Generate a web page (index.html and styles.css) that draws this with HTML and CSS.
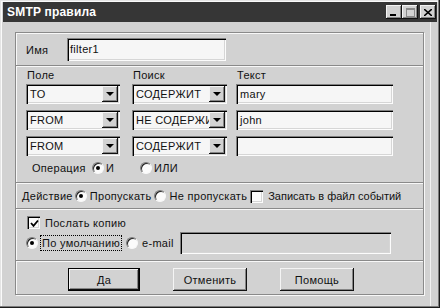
FILE: index.html
```html
<!DOCTYPE html>
<html lang="ru">
<head>
    <meta charset="UTF-8">
    <title>SMTP правила</title>
    <link rel="stylesheet" href="styles.css">
</head>
<body>
    <div class="window">
        <div class="titlebar">
            <span class="title">SMTP правила</span>
            <span class="tb-btn tb-min"><span class="min-bar"></span></span>
            <span class="tb-btn tb-max"><span class="max-box"></span></span>
            <span class="tb-btn tb-close">
                <svg width="8" height="7" viewBox="0 0 8 7"><path d="M0 0 L8 7 M8 0 L0 7" stroke="#000" stroke-width="1.6"/></svg>
            </span>
        </div>

        <div class="client">
            <div class="frame">
                <!-- name -->
                <div class="sect sect-name">
                    <span class="name-label">Имя</span>
                    <div class="field name-field">filter1</div>
                </div>

                <!-- rules -->
                <div class="sect sect-rules">
                    <div class="rules-grid">
                        <span class="col-label">Поле</span>
                        <span class="col-label">Поиск</span>
                        <span class="col-label">Текст</span>

                        <div class="combo combo-field"><span class="combo-text">TO</span><span class="combo-btn"></span></div>
                        <div class="combo combo-search"><span class="combo-text">СОДЕРЖИТ</span><span class="combo-btn"></span></div>
                        <div class="field text-field">mary</div>

                        <div class="combo combo-field"><span class="combo-text">FROM</span><span class="combo-btn"></span></div>
                        <div class="combo combo-search"><span class="combo-text">НЕ СОДЕРЖИТ</span><span class="combo-btn"></span></div>
                        <div class="field text-field">john</div>

                        <div class="combo combo-field"><span class="combo-text">FROM</span><span class="combo-btn"></span></div>
                        <div class="combo combo-search"><span class="combo-text">СОДЕРЖИТ</span><span class="combo-btn"></span></div>
                        <div class="field text-field"></div>
                    </div>
                    <div class="op-row">
                        <span class="op-label">Операция</span>
                        <span class="radio checked"></span>
                        <span class="op-and">И</span>
                        <span class="radio"></span>
                        <span class="op-or">ИЛИ</span>
                    </div>
                </div>

                <!-- action -->
                <div class="sect sect-action">
                    <span class="action-label">Действие</span>
                    <span class="radio checked"></span>
                    <span class="opt-text">Пропускать</span>
                    <span class="radio"></span>
                    <span class="opt-text">Не пропускать</span>
                    <span class="check"></span>
                    <span class="opt-text log-text">Записать в файл событий</span>
                </div>

                <!-- copy -->
                <div class="sect sect-copy">
                    <div class="copy-row">
                        <span class="check checked">
                            <svg width="9" height="9" viewBox="0 0 9 9"><path d="M1 4 L3.5 6.8 L8 1.5" fill="none" stroke="#000" stroke-width="1.8"/></svg>
                        </span>
                        <span class="opt-text">Послать копию</span>
                    </div>
                    <div class="dest-row">
                        <span class="radio checked"></span>
                        <span class="opt-text focused">По умолчанию</span>
                        <span class="radio"></span>
                        <span class="opt-text">e-mail</span>
                        <div class="field email-field disabled"></div>
                    </div>
                </div>

                <!-- buttons -->
                <div class="sect sect-buttons">
                    <button class="btn default">Да</button>
                    <button class="btn">Отменить</button>
                    <button class="btn">Помощь</button>
                </div>
            </div>
        </div>
    </div>
</body>
</html>
```

FILE: styles.css
```css
body {
    margin: 0;
    font-family: "Liberation Sans", Arial, sans-serif;
    font-size: 11px;
    letter-spacing: 0.3px;
    color: #111;
    background-color: #d2d2d2;
}

.window {
    box-sizing: border-box;
    width: 440px;
    height: 308px;
    padding: 2px 3px 0 3px;
    background-color: #d2d2d2;
    box-shadow: inset -1px -1px 0 #1c1c1c, inset -2px -2px 0 #7c7c7c,
                inset 1px 1px 0 #e4e4e4, inset 2px 2px 0 #fafafa;
}

/* title bar */
.titlebar {
    display: flex;
    align-items: center;
    height: 20px;
    padding: 0 1px 0 4px;
    background-color: #363636;
}
.title {
    flex: 1;
    color: #fff;
    font-weight: bold;
    font-size: 12px;
    letter-spacing: 0.2px;
}
.tb-btn {
    display: flex;
    align-items: center;
    justify-content: center;
    width: 16px;
    height: 14px;
    box-sizing: border-box;
    background-color: #d2d2d2;
    box-shadow: inset -1px -1px 0 #111, inset 1px 1px 0 #f4f4f4,
                inset -2px -2px 0 #858585;
}
.tb-close {
    margin-left: 2px;
}
.min-bar {
    width: 6px;
    height: 2px;
    margin-top: 6px;
    margin-right: 2px;
    background-color: #000;
}
.max-box {
    width: 7px;
    height: 6px;
    border: 1px solid #8a8a8a;
    border-top-width: 2px;
}

/* client area */
.client {
    box-sizing: border-box;
    width: 428px;
    height: 284px;
    padding: 10px 0 0 12px;
    border-right: 1px solid #f2f2f2;
}
.frame {
    width: 409px;
    border: 1px solid #8a8a8a;
    box-sizing: border-box;
    box-shadow: 1px 1px 0 #f8f8f8, inset 1px 1px 0 #f8f8f8;
}
.sect {
    box-sizing: border-box;
}
.sect + .sect {
    border-top: 1px solid #8a8a8a;
    box-shadow: inset 0 1px 0 #f8f8f8;
}

/* common controls */
.field,
.combo {
    box-sizing: border-box;
    height: 20px;
    background-color: #f6f6f6;
    box-shadow: inset 1px 1px 0 #808080, inset 2px 2px 0 #000,
                inset -1px -1px 0 #fcfcfc, inset -2px -2px 0 #d6d6d6;
}
.field {
    padding: 0 4px;
    line-height: 20px;
    white-space: nowrap;
}
.field.disabled {
    background-color: #d2d2d2;
}
.combo {
    display: flex;
    padding: 2px;
}
.combo-text {
    flex: 1;
    overflow: hidden;
    white-space: nowrap;
    padding-left: 2px;
    line-height: 16px;
}
.combo-btn {
    display: flex;
    align-items: center;
    justify-content: center;
    width: 16px;
    background-color: #d2d2d2;
    box-shadow: inset -1px -1px 0 #111, inset 1px 1px 0 #f4f4f4,
                inset -2px -2px 0 #858585;
}
.combo-btn::after {
    content: "";
    border-top: 4px solid #000;
    border-left: 4px solid transparent;
    border-right: 4px solid transparent;
}
.radio {
    position: relative;
    flex: none;
    box-sizing: border-box;
    width: 12px;
    height: 12px;
    border-radius: 50%;
    background-color: #fbfbfb;
    border: 1px solid;
    border-color: #7c7c7c #f8f8f8 #f8f8f8 #7c7c7c;
    box-shadow: inset 1px 1px 0 #222;
}
.radio.checked::after {
    content: "";
    position: absolute;
    top: 3px;
    left: 3px;
    width: 4px;
    height: 4px;
    border-radius: 50%;
    background-color: #000;
}
.check {
    display: flex;
    align-items: center;
    justify-content: center;
    flex: none;
    box-sizing: border-box;
    width: 13px;
    height: 13px;
    background-color: #fbfbfb;
    box-shadow: inset 1px 1px 0 #808080, inset 2px 2px 0 #000,
                inset -1px -1px 0 #fcfcfc, inset -2px -2px 0 #d6d6d6;
}
.check svg {
    margin: 1px 0 0 1px;
}

/* name section */
.sect-name {
    display: flex;
    align-items: center;
    height: 32px;
    padding: 1px 0 0 10px;
}
.name-label {
    width: 41px;
}
.name-field {
    width: 159px;
    height: 23px;
    line-height: 23px;
    padding-left: 3px;
}

/* rules section */
.sect-rules {
    height: 117px;
    padding: 3px 0 0 10px;
}
.rules-grid {
    display: grid;
    grid-template-columns: 106px 104px 157px;
    row-gap: 6px;
}
.col-label {
    line-height: 13px;
    margin-bottom: -4px;
    padding-left: 1px;
}
.combo-field {
    width: 94px;
}
.combo-search {
    width: 95px;
}
.text-field {
    width: 157px;
}
.op-row {
    display: flex;
    align-items: center;
    margin-top: 6px;
    padding-left: 6px;
}
.op-label {
    width: 60px;
}
.op-and {
    width: 34px;
    margin-left: 2px;
}
.op-or {
    margin-left: 2px;
}

/* action section */
.sect-action {
    display: flex;
    align-items: center;
    height: 26px;
    padding: 1px 0 0 6px;
}
.action-label {
    margin-right: 2px;
}
.opt-text {
    margin: 0 3px 0 3px;
}
.log-text {
    margin-left: 5px;
    letter-spacing: 0;
}

/* copy section */
.sect-copy {
    height: 52px;
    padding: 7px 0 0 11px;
}
.copy-row {
    display: flex;
    align-items: center;
    height: 13px;
}
.copy-row .opt-text {
    margin-left: 5px;
}
.dest-row {
    display: flex;
    align-items: center;
    margin-top: 3px;
    margin-left: -1px;
}
.dest-row .opt-text {
    margin-left: 4px;
}
.focused {
    outline: 1px dotted #000;
    outline-offset: 1px;
    margin-right: 6px;
}
.email-field {
    width: 211px;
    height: 22px;
    margin-left: 3px;
}

/* buttons */
.sect-buttons {
    display: flex;
    height: 34px;
    padding: 7px 0 0 52px;
    gap: 33px;
}
.btn {
    width: 74px;
    height: 23px;
    padding: 0;
    border: none;
    font-family: "Liberation Sans", Arial, sans-serif;
    font-size: 11px;
    letter-spacing: 0.3px;
    color: #111;
    background-color: #d2d2d2;
    box-shadow: inset -1px -1px 0 #111, inset 1px 1px 0 #f4f4f4,
                inset -2px -2px 0 #858585;
}
.btn.default {
    width: 72px;
    box-shadow: inset 0 0 0 1px #000, inset -2px -2px 0 #111,
                inset 2px 2px 0 #f4f4f4, inset -3px -3px 0 #858585;
}
```
